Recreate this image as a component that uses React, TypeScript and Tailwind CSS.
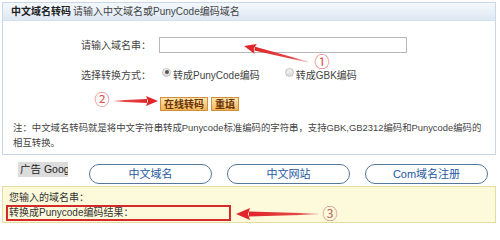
const font = { fontFamily: '"Liberation Sans", "Noto Sans CJK SC", sans-serif' };

function Arrow({ x, y, angle, len, head = 12, w = 4 }: { x: number; y: number; angle: number; len: number; head?: number; w?: number }) {
  return (
    <g transform={`translate(${x} ${y}) rotate(${angle})`}>
      <polygon points={`${head - 1},${-w / 2} ${len},-0.6 ${len},0.6 ${head - 1},${w / 2}`} fill="url(#shaft)" />
      <polygon points={`0,0 ${head},${-head * 0.42} ${head - 2},0 ${head},${head * 0.42}`} fill="#e0262a" />
    </g>
  );
}

export default function App() {
  return (
    <div className="relative w-[500px] h-[228px] overflow-hidden bg-white text-[10px] text-[#333]" style={font}>
      <div className="pt-[2px] pl-[2px]">
        {/* converter panel */}
        <div className="w-[494px] border border-[#c9d7e6]">
          <div className="h-[18px] flex items-center pl-[8px] bg-gradient-to-b from-[#f4f8fc] to-[#dde8f4] border-b border-[#d5e1ee]">
            <span className="font-bold text-[#222]">中文域名转码</span>
            <span className="ml-[2px] text-[#444]">请输入中文域名或PunyCode编码域名</span>
          </div>

          <div className="pt-[16px] pb-[4px]">
            <div className="flex items-center h-[16px]">
              <div className="w-[150px] text-right pr-[2px] text-[#444]">请输入域名串：</div>
              <div className="ml-[6px] w-[248px] h-[16px] border border-[#b8b8b8] bg-white" />
            </div>

            <div className="flex items-center h-[16px] mt-[14px]">
              <div className="w-[150px] text-right pr-[2px] text-[#444]">选择转换方式：</div>
              <div className="ml-[9px] flex items-end">
                <span className="w-[9px] h-[9px] rounded-full border border-[#c4c4c4] bg-gradient-to-b from-[#f4f4f4] to-[#d8d8d8] flex items-center justify-center mb-[6px]">
                  <span className="w-[4px] h-[4px] rounded-full bg-[#555]" />
                </span>
                <span className="ml-[2px] text-[#444]">转成PunyCode编码</span>
                <span className="ml-[25px] w-[9px] h-[9px] rounded-full border border-[#c4c4c4] bg-gradient-to-b from-[#f4f4f4] to-[#d8d8d8] mb-[6px]" />
                <span className="ml-[2px] text-[#444]">转成GBK编码</span>
              </div>
            </div>

            <div className="flex items-center h-[14px] mt-[14px] pl-[157px] gap-[3px]">
              <span className="h-[14px] px-[3px] flex items-center border border-[#d09040] bg-gradient-to-b from-[#fde7b0] to-[#f1b454] font-bold text-[#6a3306]">在线转码</span>
              <span className="h-[14px] px-[3px] flex items-center border border-[#d09040] bg-gradient-to-b from-[#fde7b0] to-[#f1b454] font-bold text-[#6a3306]">重填</span>
            </div>

            <div className="mt-[9px] pl-[10px] leading-[15px] text-[9.4px] whitespace-nowrap text-[#444]">
              注：中文域名转码就是将中文字符串转成Punycode标准编码的字符串，支持GBK,GB2312编码和Punycode编码的
              <br />
              相互转换。
            </div>
          </div>
        </div>

        {/* ad links */}
        <div className="flex items-start h-[31px] pt-[7px]">
          <div className="ml-[16px] w-[50px] h-[15px] overflow-hidden whitespace-nowrap bg-[#dcdcdc] text-[#222] text-[10.5px] leading-[15px] pl-[2px]">广告 Google</div>
          <div className="ml-[21px] mt-[2px] flex gap-[15px]">
            {['中文域名', '中文网站', 'Com域名注册'].map((t) => (
              <div key={t} className="w-[123px] h-[20px] rounded-full border border-[#56779b] flex items-center justify-center text-[11px] text-[#2457a0] bg-white">
                {t}
              </div>
            ))}
          </div>
        </div>

        {/* result */}
        <div className="w-[494px] h-[37px] border border-[#e4dca0] bg-[#fdfadc] pt-[4px] pl-[3px] text-[#333]">
          <div className="pl-[3px] leading-[14px]">您输入的域名串：</div>
          <div className="w-[225px] h-[16px] border-2 border-[#d42a2a] pl-[1px] leading-[12px]">转换成Punycode编码结果：</div>
        </div>
      </div>

      <svg className="absolute inset-0 pointer-events-none" width="500" height="228">
        <defs>
          <linearGradient id="shaft" x1="0" x2="1" y1="0" y2="0">
            <stop offset="0" stopColor="#e0262a" />
            <stop offset="0.7" stopColor="#e0262a" stopOpacity="0.85" />
            <stop offset="1" stopColor="#e0262a" stopOpacity="0.2" />
          </linearGradient>
        </defs>
        <Arrow x={244} y={46} angle={14} len={66} />
        <Arrow x={158} y={101} angle={180} len={44} />
        <Arrow x={236} y={214} angle={0} len={82} head={14} w={5} />
        <text x={322} y={67} textAnchor="middle" fontSize="15" fill="#d9534f" style={font}>①</text>
        <text x={102} y={105} textAnchor="middle" fontSize="15" fill="#d9534f" style={font}>②</text>
        <text x={330} y={219} textAnchor="middle" fontSize="15" fill="#b86a6a" style={font}>③</text>
      </svg>
    </div>
  );
}
